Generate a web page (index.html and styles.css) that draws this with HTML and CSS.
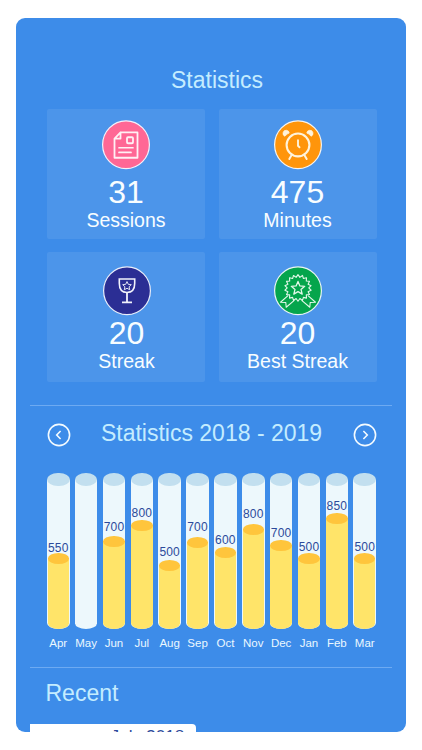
FILE: index.html
```html
<!DOCTYPE html>
<html lang="en">
<head>
    <meta charset="UTF-8">
    <meta name="viewport" content="width=device-width, initial-scale=1.0">
    <title>Statistics</title>
    <link rel="stylesheet" href="styles.css">
</head>
<body>
    <div class="phone">
        <h1 class="title">Statistics</h1>

        <div class="tiles">
            <div class="tile">
                <svg class="icon" viewBox="0 0 48 49" fill="none" stroke="#fff0f4">
                    <ellipse cx="24" cy="24.5" rx="23.4" ry="23.9" fill="#ff6795" stroke="#f4f1fa" stroke-width="1.2"/>
                    <path d="M18.5 12.2H35.5V37.5H12.5V18.3L18.5 12.2V18.3H12.5" stroke-width="1.8" stroke-linejoin="round"/>
                    <rect x="25" y="17" width="6" height="6" rx="1" stroke-width="1.8"/>
                    <path d="M17 27.5H31M17 32.2H29" stroke-width="1.7" stroke-linecap="round"/>
                </svg>
                <div class="number">31</div>
                <div class="label">Sessions</div>
            </div>
            <div class="tile">
                <svg class="icon" viewBox="0 0 48 49" fill="none" stroke="#fff3dc">
                    <ellipse cx="24" cy="24.5" rx="23.4" ry="23.9" fill="#ff950b" stroke="#f6f3ee" stroke-width="1.2"/>
                    <circle cx="24" cy="24.7" r="11.4" stroke-width="2.1"/>
                    <path d="M24 20V25.5L25.5 27" stroke-width="1.9" stroke-linecap="round"/>
                    <path d="M17.5 35L15.3 38.7M30.5 35L32.7 38.7" stroke-width="2" stroke-linecap="round"/>
                    <path d="M11 16A3.1 3.1 0 1 1 15.200 12.800L13 13.800ZM37 16A3.1 3.1 0 1 0 32.800 12.800L35 13.800Z" fill="#fff3dc" stroke-width=".8"/>
                </svg>
                <div class="number">475</div>
                <div class="label">Minutes</div>
            </div>
            <div class="tile tile-low tile-streak">
                <svg class="icon" viewBox="0 0 48 49" fill="none" stroke="#f1f2fb">
                    <ellipse cx="24" cy="24.5" rx="23.4" ry="23.9" fill="#2b2e94" stroke="#e9eefa" stroke-width="1.2"/>
                    <path d="M16.3 12.8H31.7V17C31.7 22.5 29 26.2 24 26.2S16.3 22.5 16.3 17Z" stroke-width="1.6"/>
                    <path d="M24 26V36M19 36.2H29" stroke-width="1.8"/>
                    <path d="M24 15.3L25.3 18.1L28.3 18.4L26.1 20.5L26.7 23.5L24 22L21.3 23.5L21.9 20.5L19.7 18.4L22.7 18.1Z" stroke-width=".9"/>
                </svg>
                <div class="number">20</div>
                <div class="label">Streak</div>
            </div>
            <div class="tile tile-low">
                <svg class="icon" viewBox="0 0 48 49" fill="none" stroke="#e4f8e9" stroke-width="1.1" stroke-linejoin="round">
                    <ellipse cx="24" cy="24.5" rx="23.4" ry="23.9" fill="#05a54c" stroke="#e9f5f3" stroke-width="1.2"/>
                    <path d="M14 29.3L6.5 36L11.8 36.2L12.2 41L20.3 34.2M34 29.3L41.5 36L36.2 36.2L35.8 41L27.7 34.2"/>
                    <path id="seal" d=""/>
                    <path d="M24 15.2L25.9 19.7L30.7 20.1L27 23.2L28.2 27.9L24 25.4L19.8 27.9L21 23.2L17.3 20.1L22.1 19.7Z" stroke-width="1.3"/>
                </svg>
                <div class="number">20</div>
                <div class="label">Best Streak</div>
            </div>
        </div>

        <div class="chart-section">
            <div class="chart-header">
                <svg class="arrow" viewBox="0 0 24 24"><circle cx="12" cy="12" r="10.6"/><path d="M13.6 8L9.7 12L13.6 16"/></svg>
                <h2 class="title">Statistics 2018 - 2019</h2>
                <svg class="arrow" viewBox="0 0 24 24"><circle cx="12" cy="12" r="10.6"/><path d="M10.4 8L14.3 12L10.4 16"/></svg>
            </div>
            <div class="chart" id="chart"></div>
        </div>

        <div class="recent">
            <h2 class="title">Recent</h2>
            <div class="month-tab">July 2018</div>
        </div>
    </div>

    <script>
        // month, value, fill height, space between the value and the fill
        const months = [
            ['Apr', 550, 70.5, 3.5],
            ['May', null, 0, 0],
            ['Jun', 700, 88, 7.5],
            ['Jul', 800, 103.5, 6],
            ['Aug', 500, 64, 6.5],
            ['Sep', 700, 87, 8],
            ['Oct', 600, 77, 5.5],
            ['Nov', 800, 99.5, 9],
            ['Dec', 700, 83.5, 6],
            ['Jan', 500, 70.5, 5],
            ['Feb', 850, 110.5, 6],
            ['Mar', 500, 70.5, 4.5]
        ];
        document.getElementById('chart').innerHTML = months.map(([name, value, height, space]) => `
            <div class="column">
                <div class="tube">
                    ${value ? `<span class="value" style="margin-bottom: ${space}px">${value}</span>
                    <div class="fill" style="height: ${height}px"></div>` : ''}
                </div>
                <div class="month">${name}</div>
            </div>`).join('');

        // Zigzag edge of the award
        let points = [];
        for (let i = 0; i < 36; i++) {
            const r = i % 2 ? 10.8 : 13.3;
            const a = Math.PI * i / 18;
            points.push((24 + r * Math.sin(a)).toFixed(1) + ' ' + (21.7 - r * Math.cos(a)).toFixed(1));
        }
        document.getElementById('seal').setAttribute('d', 'M' + points.join('L') + 'Z');
    </script>
</body>
</html>
```
FILE: styles.css
```css
*,
*::before {
    box-sizing: border-box;
}
body {
    margin: 0;
    padding: 18px 16px;
    background-color: #fff;
    font-family: "Liberation Sans", Arial, sans-serif;
}
.phone {
    width: 390px;
    height: 714px;
    padding: 49px 14px 0;
    border-radius: 9px;
    background-color: #3d8ce9;
    overflow: hidden;
}
.title {
    margin: 0;
    font-size: 23px;
    line-height: 26px;
    font-weight: normal;
    text-align: center;
    color: #c4ecff;
}
h1.title {
    padding-left: 12px;
}
.tiles {
    display: grid;
    grid-template-columns: 158px 158px;
    gap: 13.5px;
    padding: 15.5px 0 0 17px;
}
.tile {
    display: flex;
    flex-direction: column;
    align-items: center;
    height: 130px;
    padding-top: 11.5px;
    border-radius: 2px;
    background-color: #4c95ea;
    color: #f8fdff;
}
.tile-low {
    padding-top: 14px;
}
.tile-streak {
    padding-left: 1px;
}
.icon {
    flex: none;
    width: 48px;
    height: 49.5px;
}
.number {
    margin-top: 4.5px;
    font-size: 32px;
    line-height: 36px;
}
.label {
    margin-top: -1px;
    font-size: 19.5px;
    line-height: 22px;
    white-space: nowrap;
}
.tile-low .number {
    margin-top: -1px;
}
.chart-section {
    height: 263px;
    margin-top: 23px;
    border-top: 1.5px solid #6daaf2;
    border-bottom: 1.5px solid #6daaf2;
}
.chart-header {
    display: flex;
    align-items: center;
    justify-content: space-between;
    height: 26px;
    margin: 14px 15.5px 0 16.5px;
}
.arrow {
    width: 24px;
    height: 24px;
    margin-top: 3px;
    fill: none;
    stroke: #f4fbff;
    stroke-width: 1.6px;
}
.chart {
    display: grid;
    grid-template-columns: repeat(12, 22.5px);
    justify-content: space-between;
    padding-top: 33.5px;
    margin: 0 16px 0 17px;
}
.tube {
    position: relative;
    display: flex;
    flex-direction: column;
    align-items: center;
    justify-content: flex-end;
    height: 149.5px;
    border-radius: 0 0 50% 50% / 0 0 6px 6px;
    background-color: #edf8fc;
}
.tube::before {
    content: "";
    position: absolute;
    top: -7px;
    left: 0;
    width: 100%;
    height: 13.5px;
    border-radius: 50%;
    background-color: #c2dfef;
}
.value {
    font-size: 12px;
    line-height: 14px;
    letter-spacing: .2px;
    color: #2c4a9b;
}
.fill {
    position: relative;
    width: calc(100% - 1px);
    border-radius: 0 0 50% 50% / 0 0 6px 6px;
    background-color: #ffe469;
}
.fill::before {
    content: "";
    position: absolute;
    top: -5.5px;
    left: 0;
    width: 100%;
    height: 11px;
    border-radius: 50%;
    background-color: #ffc53c;
}
.month {
    display: flex;
    justify-content: center;
    margin-top: 7px;
    font-size: 11.5px;
    line-height: 14px;
    color: #ebf8ff;
}
.recent .title {
    padding: 12px 0 0 15.5px;
    text-align: left;
}
.month-tab {
    width: 166px;
    height: 40px;
    margin-top: 18px;
    padding: 2px 0 0 80.5px;
    border-radius: 0 4px 4px 0;
    background-color: #fff;
    font-size: 17.3px;
    line-height: 20px;
    color: #2c4a9b;
}
```
